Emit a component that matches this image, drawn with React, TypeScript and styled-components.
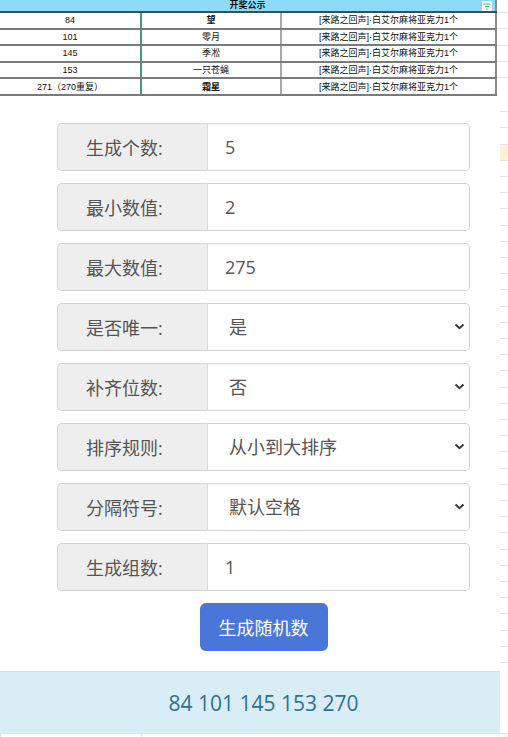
import React, { useState } from "react";
import styled, { createGlobalStyle } from "styled-components";

const GlobalStyle = createGlobalStyle`
  html, body {
    margin: 0;
    padding: 0;
    background: #ffffff;
  }
  body {
    font-family: "Open Sans", "Noto Sans CJK SC", sans-serif;
  }
`;

const CJK = `"Open Sans", "Noto Sans CJK SC", sans-serif`;
const SHEET = `"Liberation Sans", "Noto Sans CJK SC", sans-serif`;

const Page = styled.div`
  width: 508px;
  height: 737px;
  overflow: hidden;
  display: flex;
  flex-direction: column;
`;

const Band = styled.div`
  display: flex;
`;

const SheetStrip = styled.div<{ $offset: number }>`
  flex: 1;
  position: relative;
  background-image: repeating-linear-gradient(
    to bottom,
    transparent 0,
    transparent 15.2px,
    #e4e4e4 15.2px,
    #e4e4e4 16.2px
  );
  background-position: 0 ${(p) => p.$offset}px;
`;

const YellowCell = styled.div`
  position: absolute;
  left: 0;
  right: 0;
  top: 49px;
  height: 15px;
  background: #fff3cf;
`;

const Table = styled.table`
  width: 497px;
  height: 96px;
  border-collapse: collapse;
  table-layout: fixed;
  font-family: ${SHEET};
  font-size: 9px;
  color: #111;
  border-right: 2px solid #8a8a8a;
`;

const HeadCell = styled.th`
  height: 11px;
  padding: 0;
  background: #8ddbf6;
  font-weight: bold;
  font-size: 9px;
  line-height: 11px;
  text-align: center;
  position: relative;
  border-bottom: 2px solid #3c4f55;
`;

const FilterIcon = styled.span`
  position: absolute;
  right: 3px;
  top: 1px;
  width: 10px;
  height: 10px;
  background: #ffffff;
  border-radius: 1px;
  display: flex;
  align-items: center;
  justify-content: center;
`;

const Cell = styled.td<{ $bold?: boolean; $divider?: string }>`
  height: 14px;
  padding: 0;
  line-height: 14px;
  text-align: center;
  white-space: nowrap;
  font-weight: ${(p) => (p.$bold ? "bold" : "normal")};
  border-bottom: 2px solid #7b7b7b;
  border-right: ${(p) => (p.$divider ? `2px solid ${p.$divider}` : "none")};
`;

const Main = styled.div`
  width: 500px;
  background: #ffffff;
  padding-top: 27px;
`;

const Form = styled.div`
  margin-left: 57px;
  width: 413px;
  display: flex;
  flex-direction: column;
  gap: 12px;
`;

const Row = styled.div`
  display: flex;
  height: 48px;
`;

const Label = styled.div`
  width: 151px;
  box-sizing: border-box;
  flex-shrink: 0;
  display: flex;
  align-items: center;
  padding-left: 28px;
  background: #eeeeee;
  border: 1px solid #d2d2d2;
  border-right: 1px solid #dcdcdc;
  border-radius: 5px 0 0 5px;
  font-family: ${CJK};
  font-size: 18px;
  color: #555555;
`;

const Field = styled.input`
  flex: 1;
  min-width: 0;
  box-sizing: border-box;
  height: 48px;
  margin: 0;
  padding: 0 0 0 17px;
  border: 1px solid #d2d2d2;
  border-left: none;
  border-radius: 0 5px 5px 0;
  font-family: ${CJK};
  font-size: 18px;
  color: #555555;
  background: #ffffff;
  outline: none;
`;

const SelectWrap = styled.div`
  flex: 1;
  position: relative;
  display: flex;
`;

const Select = styled.select`
  flex: 1;
  appearance: none;
  -webkit-appearance: none;
  box-sizing: border-box;
  height: 48px;
  margin: 0;
  padding: 0 0 0 21px;
  border: 1px solid #d2d2d2;
  border-left: none;
  border-radius: 0 5px 5px 0;
  font-family: ${CJK};
  font-size: 18px;
  color: #555555;
  background: #ffffff;
  outline: none;
`;

const Chevron = styled.svg`
  position: absolute;
  right: 5px;
  top: 20px;
  pointer-events: none;
`;

const ButtonRow = styled.div`
  margin-left: 57px;
  width: 413px;
  display: flex;
  justify-content: center;
  padding: 12px 0 20px;
`;

const GenButton = styled.button`
  width: 128px;
  height: 48px;
  border: none;
  border-radius: 6px;
  background: #4a76d9;
  color: #ffffff;
  font-family: ${CJK};
  font-size: 18px;
  cursor: pointer;
`;

const Result = styled.div`
  width: 500px;
  height: 62px;
  box-sizing: border-box;
  background: #d9edf7;
  border-top: 1px solid #bfe3f1;
  display: flex;
  align-items: center;
  justify-content: center;
  padding-left: 27px;
  font-family: ${CJK};
  font-size: 21px;
  color: #31708f;
`;

const Footer = styled.div`
  flex: 1;
  display: grid;
  grid-template-columns: 141px 364px 1fr;
  border-top: 1px solid #e4e4e4;
  & > div {
    border-left: 1px solid #e4e4e4;
  }
`;

const rows = [
  { no: "84", name: "望", bold: true },
  { no: "101", name: "零月" },
  { no: "145", name: "季凇" },
  { no: "153", name: "一只苍蝇" },
  { no: "271（270重复）", name: "霜星", bold: true },
];

const prize = "[来路之回声]·白艾尔麻将亚克力1个";

type Item =
  | { label: string; kind: "input"; value: string }
  | { label: string; kind: "select"; value: string; options: string[] };

const items: Item[] = [
  { label: "生成个数:", kind: "input", value: "5" },
  { label: "最小数值:", kind: "input", value: "2" },
  { label: "最大数值:", kind: "input", value: "275" },
  { label: "是否唯一:", kind: "select", value: "是", options: ["是", "否"] },
  { label: "补齐位数:", kind: "select", value: "否", options: ["否", "是"] },
  {
    label: "排序规则:",
    kind: "select",
    value: "从小到大排序",
    options: ["从小到大排序", "从大到小排序", "不排序"],
  },
  {
    label: "分隔符号:",
    kind: "select",
    value: "默认空格",
    options: ["默认空格", "逗号", "换行"],
  },
  { label: "生成组数:", kind: "input", value: "1" },
];

function FormRow({ item }: { item: Item }) {
  const [value, setValue] = useState(item.value);
  return (
    <Row>
      <Label>{item.label}</Label>
      {item.kind === "input" ? (
        <Field value={value} onChange={(e) => setValue(e.target.value)} />
      ) : (
        <SelectWrap>
          <Select value={value} onChange={(e) => setValue(e.target.value)}>
            {item.options.map((o) => (
              <option key={o}>{o}</option>
            ))}
          </Select>
          <Chevron width="11" height="7" viewBox="0 0 11 7">
            <path
              d="M1.5 1.5 L5.5 5.2 L9.5 1.5"
              fill="none"
              stroke="#3a3a3a"
              strokeWidth="2"
            />
          </Chevron>
        </SelectWrap>
      )}
    </Row>
  );
}

export default function App() {
  return (
    <Page>
      <GlobalStyle />
      <Band>
        <Table>
          <colgroup>
            <col style={{ width: 141 }} />
            <col style={{ width: 140 }} />
            <col />
          </colgroup>
          <thead>
            <tr>
              <HeadCell colSpan={3}>
                开奖公示
                <FilterIcon>
                  <svg width="8" height="7" viewBox="0 0 8 7">
                    <path
                      d="M0.5 1 H7.5 M2 3.5 H6 M3.2 6 H4.8"
                      stroke="#2fbf71"
                      strokeWidth="1.2"
                    />
                  </svg>
                </FilterIcon>
              </HeadCell>
            </tr>
          </thead>
          <tbody>
            {rows.map((r) => (
              <tr key={r.no}>
                <Cell $divider="#4f9680">{r.no}</Cell>
                <Cell $bold={r.bold} $divider="#a8a8a8">
                  {r.name}
                </Cell>
                <Cell>{prize}</Cell>
              </tr>
            ))}
          </tbody>
        </Table>
        <SheetStrip $offset={-3} />
      </Band>
      <Band>
        <Main>
          <Form>
            {items.map((it) => (
              <FormRow key={it.label} item={it} />
            ))}
          </Form>
          <ButtonRow>
            <GenButton>生成随机数</GenButton>
          </ButtonRow>
        </Main>
        <SheetStrip $offset={0}>
          <YellowCell />
        </SheetStrip>
      </Band>
      <Result>84 101 145 153 270</Result>
      <Footer>
        <div />
        <div />
        <div />
      </Footer>
    </Page>
  );
}
